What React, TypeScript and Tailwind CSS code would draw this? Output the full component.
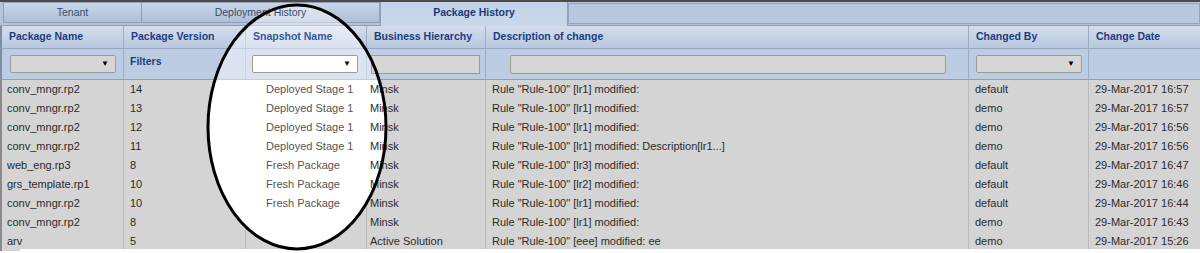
import React from 'react';

const cols = 'grid grid-cols-[122px_122px_121px_119px_483px_120px_113px]';

const rows = [
  ['conv_mngr.rp2', '14', 'Deployed Stage 1', 'Minsk', 'Rule "Rule-100" [lr1] modified:', 'default', '29-Mar-2017 16:57'],
  ['conv_mngr.rp2', '13', 'Deployed Stage 1', 'Minsk', 'Rule "Rule-100" [lr1] modified:', 'demo', '29-Mar-2017 16:57'],
  ['conv_mngr.rp2', '12', 'Deployed Stage 1', 'Minsk', 'Rule "Rule-100" [lr1] modified:', 'demo', '29-Mar-2017 16:56'],
  ['conv_mngr.rp2', '11', 'Deployed Stage 1', 'Minsk', 'Rule "Rule-100" [lr1] modified: Description[lr1...]', 'demo', '29-Mar-2017 16:56'],
  ['web_eng.rp3', '8', 'Fresh Package', 'Minsk', 'Rule "Rule-100" [lr3] modified:', 'default', '29-Mar-2017 16:47'],
  ['grs_template.rp1', '10', 'Fresh Package', 'Minsk', 'Rule "Rule-100" [lr2] modified:', 'default', '29-Mar-2017 16:46'],
  ['conv_mngr.rp2', '10', 'Fresh Package', 'Minsk', 'Rule "Rule-100" [lr1] modified:', 'default', '29-Mar-2017 16:44'],
  ['conv_mngr.rp2', '8', '', 'Minsk', 'Rule "Rule-100" [lr1] modified:', 'demo', '29-Mar-2017 16:43'],
  ['arv', '5', '', 'Active Solution', 'Rule "Rule-100" [eee] modified: ee', 'demo', '29-Mar-2017 15:26'],
];

const headers = ['Package Name', 'Package Version', 'Snapshot Name', 'Business Hierarchy', 'Description of change', 'Changed By', 'Change Date'];

// little combo box used in the filter row
const Select = ({ white = false, width }: { white?: boolean; width: string }) => (
  <div
    className={`relative z-20 flex h-[18px] items-center justify-end rounded-[2px] border border-[#9a9a9a] pr-[6px] ${width} ${
      white ? 'bg-white' : 'bg-[#d6d6d6]'
    }`}
  >
    <span className="text-[8px] leading-none text-black">▼</span>
  </div>
);

// the hand-drawn highlight round the Snapshot column
const Ellipse = ({ outline }: { outline?: boolean }) => (
  <svg
    width="1200"
    height="253"
    className={`pointer-events-none absolute left-0 top-0 ${outline ? 'z-30' : 'z-10'}`}
  >
    <defs>
      <linearGradient id="lens" gradientUnits="userSpaceOnUse" x1="0" y1="0" x2="0" y2="253">
        <stop offset="0.314" stopColor="#fff" stopOpacity="0.45" />
        <stop offset="0.318" stopColor="#fff" stopOpacity="1" />
      </linearGradient>
    </defs>
    <ellipse
      cx="297"
      cy="127"
      rx="89"
      ry="122"
      fill={outline ? 'none' : 'url(#lens)'}
      stroke={outline ? '#000' : 'none'}
      strokeWidth="3"
    />
  </svg>
);

export default function App() {
  return (
    <div className="relative isolate h-[253px] w-[1200px] overflow-hidden bg-white font-['Liberation_Sans',Arial,sans-serif]">
      {/* top edge */}
      <div className="h-[2px] bg-[#4b4b4b]" />

      {/* tab strip */}
      <div className="flex h-[24px] border-b border-[#8d9db4] bg-[#b3c4db] pl-[3px]">
        <div className="flex h-[21px] w-[139px] items-center justify-center border border-[#8fa0b8] bg-gradient-to-b from-[#cad7e8] to-[#adbed6] text-[10.5px] text-[#3b4b6c]">
          <span className="relative z-20">Tenant</span>
        </div>
        <div className="flex h-[21px] w-[238px] items-center justify-center border border-l-0 border-[#8fa0b8] bg-gradient-to-b from-[#cad7e8] to-[#adbed6] text-[10.5px] text-[#3b4b6c]">
          <span className="relative z-20">Deployment History</span>
        </div>
        <div className="mb-[-1px] flex h-[24px] w-[188px] items-start justify-center border-x border-[#8fa0b8] bg-gradient-to-b from-[#c4d3e7] to-[#c9d7e9] pt-[3px] text-[10.5px] font-bold text-[#1c3a77]">
          <span className="relative z-20">Package History</span>
        </div>
        <div className="mt-[1px] h-[21px] flex-1 border border-[#94a5bd] bg-[#b6c7de]" />
      </div>

      {/* column headers */}
      <div className={`${cols} h-[23px] border-b border-[#97a8c0] border-l-2 border-l-[#7e8ea6] bg-gradient-to-b from-[#d3deee] to-[#b7c8df]`}>
        {headers.map((h, i) => (
          <div
            key={h}
            className={`flex items-center border-r border-[#9cadc5] pl-[7px] text-[10.5px] font-bold ${
              i === 2 ? 'text-[#36589a]' : 'text-[#1f3d7c]'
            } ${i === 0 ? 'pl-[6px]' : ''}`}
          >
            <span className="relative z-20">{h}</span>
          </div>
        ))}
      </div>

      {/* filter row */}
      <div className={`${cols} h-[31px] border-b border-[#8e9fb6] border-l-2 border-l-[#7e8ea6] bg-[#bccde3]`}>
        <div className="flex items-center border-r border-[#9cadc5] pl-[8px]">
          <Select width="w-[106px]" />
        </div>
        <div className="border-r border-[#9cadc5] pl-[6px] pt-[5px] text-[10.5px] font-bold text-[#1f3d7c]">
          <span className="relative z-20">Filters</span>
        </div>
        <div className="flex items-center border-r border-[#9cadc5] pl-[6px]">
          <Select white width="w-[106px]" />
        </div>
        <div className="flex items-center border-r border-[#9cadc5] pl-[4px]">
          <div className="relative z-20 h-[19px] w-[109px] border border-[#9a9a9a] bg-[#d6d6d6]" />
        </div>
        <div className="flex items-center border-r border-[#9cadc5] pl-[24px]">
          <div className="h-[19px] w-[436px] rounded-[2px] border border-[#9a9a9a] bg-[#d6d6d6]" />
        </div>
        <div className="flex items-center border-r border-[#9cadc5] pl-[7px]">
          <Select width="w-[106px]" />
        </div>
        <div />
      </div>

      {/* data rows */}
      <div className="border-l-2 border-l-[#8a8a8a] bg-[#d4d4d4]">
        {rows.map((r, ri) => (
          <div key={ri} className={`${cols} h-[19px] text-[11px] text-[#2b2b2b]`}>
            {r.map((c, ci) => (
              <div
                key={ci}
                className={`flex items-center whitespace-nowrap border-r border-[#b9b9b9] ${
                  ci === 2 ? 'pl-[20px] text-[#555]' : ci === 0 ? 'pl-[5px]' : ci === 3 ? 'pl-[3px]' : 'pl-[6px]'
                }`}
              >
                <span className="relative z-20">{c}</span>
              </div>
            ))}
          </div>
        ))}
      </div>

      {/* bottom cut-off */}
      <div className="absolute bottom-0 left-[20px] right-0 z-30 h-[4px] bg-white" />

      <Ellipse />
      <Ellipse outline />
    </div>
  );
}
